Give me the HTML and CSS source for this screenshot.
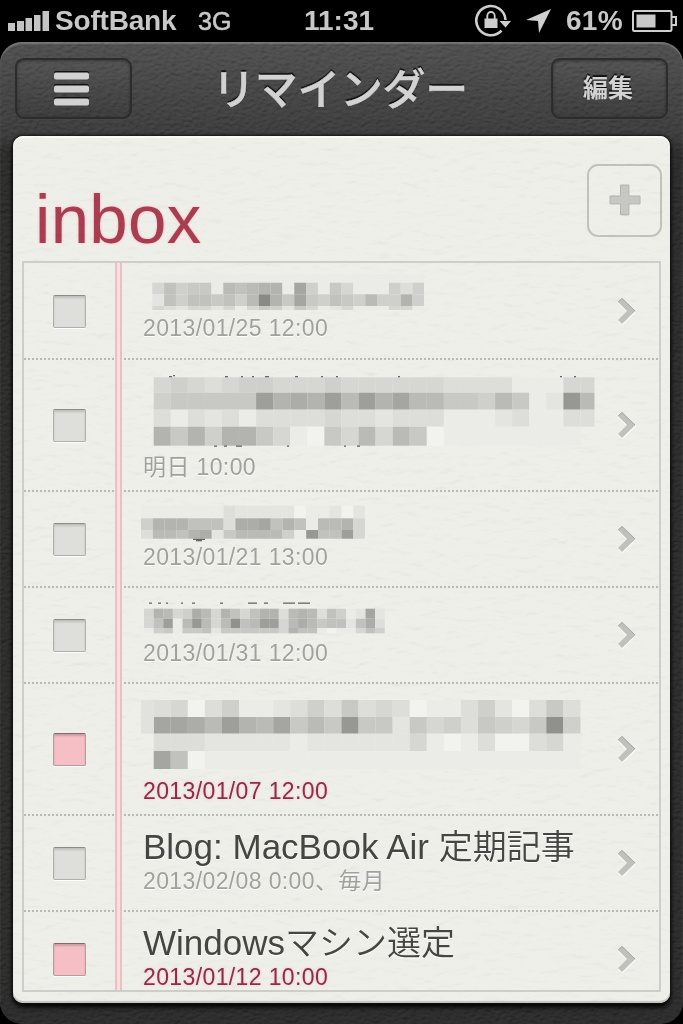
FILE: index.html
```html
<!DOCTYPE html>
<html lang="ja">
<head>
<meta charset="utf-8">
<title>リマインダー</title>
<link rel="stylesheet" href="styles.css">
</head>
<body>
<div class="status">
  <svg class="signal" width="42" height="22" viewBox="0 0 42 22"><path d="M0 13h7v8H0zM9 11h7v10H9zM17.500 8h6.500v13h-6.500zM26 5h6.500v16H26zM34.500 1h6.500v20h-6.500z" fill="#c4c4c4"/></svg>
  <span class="carrier">SoftBank</span>
  <span class="network">3G</span>
  <span class="clock">11:31</span>
  <svg class="lock" width="38" height="34" viewBox="0 0 38 34"><path d="M27.500 27.700A14.600 14.600 0 1 1 31.500 17" fill="none" stroke="#cfcfcf" stroke-width="2.600"/><path d="M25.500 18h11.500l-5.500 6.500z" fill="#cfcfcf"/><path d="M10.500 15.500h13v9.500h-13z" fill="#cfcfcf"/><path d="M13.300 16v-3a3.700 4 0 0 1 7.400 0v3" fill="none" stroke="#cfcfcf" stroke-width="1.800"/></svg>
  <svg class="arrow" width="26" height="26" viewBox="0 0 26 26"><path d="M25 1L13 25l-1-12L0 12z" fill="#cfcfcf"/></svg>
  <span class="percent">61%</span>
  <svg class="battery" width="45" height="22" viewBox="0 0 45 22"><rect x="1" y="1" width="38.500" height="20" rx="1.500" fill="none" stroke="#cfcfcf" stroke-width="2"/><path d="M40 7h4v8h-4" fill="none" stroke="#cfcfcf" stroke-width="2"/><path d="M4.500 4.500h19v13h-19z" fill="#c9c9c9"/></svg>
</div>
<div class="frame">
  <svg class="grain" width="683" height="982"><filter id="leather" x="0" y="0" width="100%" height="100%"><feTurbulence type="fractalNoise" baseFrequency="0.2 0.3" numOctaves="3" seed="4" result="n"/><feDiffuseLighting in="n" surfaceScale="1.600" diffuseConstant="0.7" lighting-color="#fff"><feDistantLight azimuth="250" elevation="42"/></feDiffuseLighting></filter><rect width="683" height="982" filter="url(#leather)"/></svg>
  <header class="bar">
    <div class="button">
      <svg width="36" height="36" viewBox="0 0 36 36"><g fill="#101010"><rect y="0" width="35" height="7" rx="2"/><rect y="13" width="35" height="7" rx="2"/><rect y="26" width="35" height="7" rx="2"/></g><g fill="#d2d2d2"><rect y="1.500" width="35" height="7" rx="2"/><rect y="14.500" width="35" height="7" rx="2"/><rect y="27.500" width="35" height="7" rx="2"/></g></svg>
    </div>
    <h1 class="title">リマインダー</h1>
    <div class="button">編集</div>
  </header>
  <main class="paper">
    <svg class="grain paper-grain" width="657" height="867"><filter id="fiber" x="0" y="0" width="100%" height="100%"><feTurbulence type="fractalNoise" baseFrequency="0.06 0.14" numOctaves="4" seed="9" result="n"/><feDiffuseLighting in="n" surfaceScale="1.600" diffuseConstant="1.130" lighting-color="#fff"><feDistantLight azimuth="260" elevation="62"/></feDiffuseLighting></filter><rect width="657" height="867" filter="url(#fiber)"/></svg>
    <div class="heading">
      <h2 class="name">inbox</h2>
      <div class="add"><svg width="32" height="34" viewBox="0 0 32 34"><path d="M11 2h10v10.500h10v8H21V32H11V20.500H1v-8h10z" fill="#fff"/><path d="M11.500 1h8.500v11h11v8H20v11h-8.500V20H1v-8h10.500z" fill="#c7c8c4" stroke="#b3b4b0"/></svg></div>
    </div>
    <div class="list">
      <div class="margin-line"></div>
      <div class="row first"><span class="box"></span><div class="text"><svg class="mosaic" data-mosaic="0" viewBox="141 263 460 51" width="460" height="51"></svg><p class="date">2013/01/25 12:00</p></div><svg class="chevron" width="20" height="28" viewBox="0 0 20 28"><use href="#chev"/></svg></div>
      <div class="row tall"><span class="box"></span><div class="text"><svg class="mosaic" data-mosaic="1" viewBox="141 360 460 93" width="460" height="93"></svg><p class="date">明日 10:00</p></div><svg class="chevron" width="20" height="28" viewBox="0 0 20 28"><use href="#chev"/></svg></div>
      <div class="row"><span class="box"></span><div class="text"><svg class="mosaic" data-mosaic="2" viewBox="141 492 460 51" width="460" height="51"></svg><p class="date">2013/01/21 13:00</p></div><svg class="chevron" width="20" height="28" viewBox="0 0 20 28"><use href="#chev"/></svg></div>
      <div class="row"><span class="box"></span><div class="text"><svg class="mosaic" data-mosaic="3" viewBox="141 588 460 51" width="460" height="51"></svg><p class="date">2013/01/31 12:00</p></div><svg class="chevron" width="20" height="28" viewBox="0 0 20 28"><use href="#chev"/></svg></div>
      <div class="row tall"><span class="box late"></span><div class="text"><svg class="mosaic" data-mosaic="4" viewBox="141 684 460 93" width="460" height="93"></svg><p class="date overdue">2013/01/07 12:00</p></div><svg class="chevron" width="20" height="28" viewBox="0 0 20 28"><use href="#chev"/></svg></div>
      <div class="row"><span class="box"></span><div class="text"><p class="task">Blog: MacBook Air <span class="cjk">定期記事</span></p><p class="date">2013/02/08 0:00、毎月</p></div><svg class="chevron" width="20" height="28" viewBox="0 0 20 28"><use href="#chev"/></svg></div>
      <div class="row"><span class="box late"></span><div class="text"><p class="task">Windows<span class="cjk">マシン選定</span></p><p class="date overdue">2013/01/12 10:00</p></div><svg class="chevron" width="20" height="28" viewBox="0 0 20 28"><defs><g id="chev"><path d="M1 5L5.500 .5 19 14 5.500 27 1 23 10 14z" fill="#fff"/><path d="M1 4L5 0 18.500 13 5 26 1 22 10 13z" fill="#c0c1bd"/><path d="M1 4L5 .5 18 13" fill="none" stroke="#a6a7a3"/></g></defs><use href="#chev"/></svg></div>
    </div>
  </main>
</div>
<script src="mosaic.js"></script>
</body>
</html>
```

FILE: mosaic.js
```js
// Each mosaic: left edge, cell width, right limit, row edges, and one hex shade per cell.
const mosaics = [
  { x: 152.3, w: 11.83, end: 424, y: [274, 282.7, 294.3, 306, 310], rows: [
    "11111111111111111111111", "475661878991b5164111535", "275776758f96b6576585595", "43244241465264124111441"],
    marks: [] },
  { x: 153.7, w: 17.07, end: 594.5, y: [377.3, 392.7, 409.7, 426.7, 445.7], rows: [
    "45434554445444444333311144", "566666c9a9c8c9b886658612d8", "31323133334332333111231133", "9695996410648486011111111."],
    marks: [[169, 376, 3], [173, 375, 2], [225, 376, 3], [241, 376, 2], [252, 376, 2], [265, 376, 4], [295, 376, 3], [321, 376, 2], [336, 376, 2], [398, 376, 2], [560, 376, 2], [574, 376, 2], [214, 445.5, 3], [224, 445.5, 3], [236, 445.5, 6], [287, 445.5, 2], [344, 445.5, 2], [357, 445.5, 3]] },
  { x: 141, w: 11.8, end: 365, y: [505.7, 518.3, 530, 538.7], rows: [
    "1111111322222011202", "59997773aab79718894", "38879a26888851d77c4"],
    marks: [[193, 538.7, 12], [196, 540, 6]] },
  { x: 144, w: 9.63, end: 385, y: [608.7, 618.7, 628, 633.3], rows: [
    "49845a84974799389837512b2", "47c18d848e78cc48a867727a3", "1561667266666649771011475"],
    marks: [[149, 602.5, 3], [158, 602.5, 3], [166, 602.5, 2], [181, 602.5, 2], [192, 602.5, 3], [220, 602.5, 3], [248, 602.5, 9], [264, 602.5, 4], [283, 602.5, 12], [298, 602.5, 12]] },
  { x: 153.7, w: 17.07, end: 580.7, y: [700, 717, 733.7, 751, 769], rows: [
    "3403511235363430113520363", "bba8c98b686d66264536546e5", "3332222212222224101300341", "b701111111111111111111111"],
    edge: [141, 700, 12.7, 33.7], marks: [] }
];

const NS = "http://www.w3.org/2000/svg";
function rect(svg, x, y, w, h, fill) {
  const r = document.createElementNS(NS, "rect");
  Object.entries({ x, y, width: w, height: h, fill }).forEach(([k, v]) => r.setAttribute(k, v));
  svg.appendChild(r);
}
document.querySelectorAll(".mosaic").forEach(svg => {
  const m = mosaics[svg.dataset.mosaic];
  m.rows.forEach((row, j) => [...row].forEach((c, i) => {
    if (c === ".") return;
    const v = 242 - 7 * parseInt(c, 16);
    const left = m.x + i * m.w;
    const width = Math.min(m.w, m.end - left);
    if (width > 0) rect(svg, left, m.y[j], width, m.y[j + 1] - m.y[j], `rgb(${v},${v},${v - 4})`);
  }));
  if (m.edge) rect(svg, ...m.edge, "#e1e2dd");
  m.marks.forEach(([x, y, w]) => rect(svg, x, y, w, 1.3, "#666"));
});
```

FILE: styles.css
```css
* { box-sizing: border-box; }
body { margin: 0; width: 683px; height: 1024px; overflow: hidden; background: #000; font-family: "Liberation Sans", "Noto Sans CJK JP", sans-serif; }
h1, h2, p { margin: 0; font-weight: 400; }
svg { display: block; flex: none; }

.status { height: 42px; display: flex; align-items: center; color: #c8c8c8; font-size: 28px; font-weight: 700; white-space: nowrap; }
.signal { margin-left: 8px; margin-bottom: 1px; }
.carrier { margin-left: 5px; width: 143px; letter-spacing: -.2px; }
.network { width: 106px; font-size: 25px; font-weight: 400; -webkit-text-stroke: .6px #c8c8c8; padding-top: 1px; }
.clock { width: 170px; }
.lock { margin-bottom: 2px; }
.arrow { margin-left: 14px; }
.percent { margin-left: 14px; width: 66px; letter-spacing: .3px; }

.frame { position: relative; height: 982px; padding: 0 13px 0; border-radius: 22px; overflow: hidden; background: linear-gradient(#494949, #363636 92px, #262626 110px, #262626); box-shadow: inset 0 2px 1px #6d6d6d; }
.grain { position: absolute; left: 0; top: 0; mix-blend-mode: soft-light; opacity: .32; pointer-events: none; }
.bar { position: relative; height: 94px; padding: 16px 2px 0; display: flex; justify-content: space-between; align-items: flex-start; color: #d2d2d2; text-shadow: 0 -2px 1px #111; }
.button { width: 117px; height: 61px; display: flex; align-items: center; justify-content: center; border: 2px solid #2c2c2c; border-radius: 9px; background: linear-gradient(rgba(255,255,255,.03), rgba(0,0,0,.06)); box-shadow: inset 0 1px 3px rgba(0,0,0,.35), 0 1px 1px #484848; font-size: 25px; font-weight: 700; padding: 0 3px 5px 0; font-family: "Noto Sans CJK JP", sans-serif; }
.button svg { margin-top: 5px; }
.title { padding-right: 3px; font-size: 43px; line-height: 56px; font-weight: 500; -webkit-text-stroke: .4px #d2d2d2; letter-spacing: -.4px; white-space: nowrap; font-family: "Noto Sans CJK JP", sans-serif; }

.paper { position: relative; height: 867px; padding: 0 9px; border-radius: 10px; background: #efefea; overflow: hidden; box-shadow: 0 0 3px 1px #111, 0 4px 5px #000, inset 0 2px 0 #faf9f5, inset 0 -2px 1px #c5c6c1; }
.paper-grain { mix-blend-mode: multiply; opacity: .17; }
.heading { height: 125px; display: flex; justify-content: space-between; }
.name { padding: 45px 0 0 13px; font-size: 69px; line-height: 78px; color: #a83e50; letter-spacing: .3px; text-shadow: 0 0 3px #ffb9c3; }
.add { width: 75px; height: 73px; margin: 28px -1px 0 0; display: flex; align-items: center; justify-content: center; border: 2px solid #c2c3bf; border-radius: 11px; }

.list { position: relative; height: 731px; border: 2px solid #cdcecb; overflow: hidden; }
.margin-line { position: absolute; left: 91px; top: 0; width: 7px; height: 730px; border: solid #f3bcc3; border-width: 0 2px; background: #f2e3df; }
.row { height: 96px; display: flex; align-items: center; background: repeating-linear-gradient(90deg, #b8b9b5 0 2px, transparent 2px 4px) 0 100% / 100% 2px no-repeat; }
.first { height: 97px; }
.tall { height: 132px; }
.box { flex: none; width: 33px; height: 33px; margin: 0 0 1px 29px; border: 1.5px solid #aeafab; border-top-color: #8b8c88; border-radius: 2px; background: #dededa; box-shadow: inset 0 2px 2px #bfc0bc, 0 1px #fff; }
.late { background: #f6bfc6; border-color: #b8999d; border-top-color: #806a6d; box-shadow: inset 0 2px 2px #c99fa5, 0 1px #fff; }
.text { align-self: flex-start; width: 460px; margin-left: 55px; white-space: nowrap; }
.date { padding-left: 2px; font-size: 23px; line-height: 28px; color: #a0a19d; letter-spacing: .38px; text-shadow: 0 1px #fff; }
.overdue { color: #873047; text-shadow: 0 0 3px #ffb6c4; }
.task { padding: 6px 0 0 2px; height: 51px; font-size: 35px; line-height: 50px; color: #454642; text-shadow: 0 1px #fff; }
.cjk { font-size: 34px; font-weight: 350; font-family: "Noto Sans CJK JP", sans-serif; line-height: 1; }
.chevron { margin-left: 16px; }
```
